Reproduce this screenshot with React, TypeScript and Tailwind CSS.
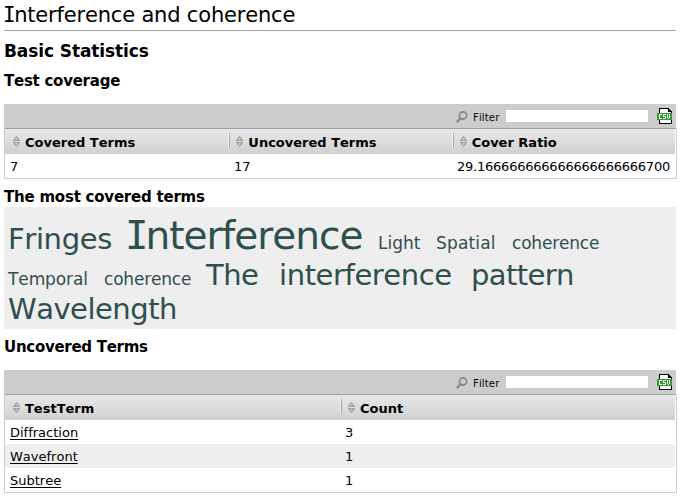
import type { ReactNode } from "react";

function SortIcon() {
  return (
    <svg className="mt-[7px] ml-2 h-[11px] w-[7px] shrink-0" viewBox="0 0 7 11" fill="none" stroke="#a0a0a0" strokeWidth="1.3">
      <path d="M0.8 4.4H6.2L3.5 0.9Z M0.8 6.6H6.2L3.5 10.1Z" />
    </svg>
  );
}

function SearchIcon() {
  return (
    <svg className="mt-[7px] h-3 w-3 shrink-0" viewBox="0 0 12 12" fill="none" stroke="#838383">
      <circle cx="7" cy="4.5" r="3.6" strokeWidth="1.6" />
      <path d="M4.5 7.2L0.8 11.2" strokeWidth="2" />
    </svg>
  );
}

function CsvIcon() {
  return (
    <svg className="mt-1 ml-[9px] h-4 w-[15px] shrink-0" viewBox="0 0 15 16" shapeRendering="crispEdges">
      <path d="M2 0H12V1H13V2H14V3H15V16H2Z" fill="#000" />
      <path d="M3 1H11V4H14V15H3Z" fill="#fff" />
      <path d="M0 5H15V12H0Z" fill="#339933" />
      <path d="M2 6H5V7H3V10H5V11H2Z M6 6H9V7H7V8H9V11H6V10H8V9H6Z M10 6H11V10H12V6H13V10H12V11H11V10H10Z" fill="#fff" />
    </svg>
  );
}

function Toolbar() {
  return (
    <div className="flex h-6 w-[672px] bg-[#cccccc] pl-[452px]">
      <SearchIcon />
      <span className="ml-[5px] w-[33px] text-[10px] leading-[27px] tracking-[0.15px] text-[#110011]">Filter</span>
      <div className="mt-1.5 h-3 w-[142px] bg-white" />
      <CsvIcon />
    </div>
  );
}

function HeadCell({ children, first, wide }: { children: ReactNode; first?: boolean; wide?: boolean }) {
  return (
    <div className={`flex ${wide ? "w-[335px]" : "w-[224px]"}`}>
      {!first && <div className="mt-1 -mr-0.5 h-[15px] w-0.5 border-r border-l border-r-[#a5a5a5] border-l-[#f3f3f3]" />}
      <SortIcon />
      <span className="ml-[5px] text-[13px] leading-[28px] font-bold whitespace-nowrap">{children}</span>
    </div>
  );
}

function Frame({ head, children }: { head: ReactNode; children: ReactNode }) {
  return (
    <div className="w-[673px]">
      <Toolbar />
      <div className="h-px w-[672px] border-l border-[#cccccc] bg-[#a0a0a0]" />
      <div className="border-x border-b border-[#cccccc] pr-px">
        <div className="flex h-[25px] bg-linear-to-b from-[#e8e8e8] to-[#cfd1d0]">{head}</div>
        {children}
      </div>
    </div>
  );
}

function Word({ children, className }: { children: ReactNode; className: string }) {
  return <span className={`shrink-0 whitespace-nowrap ${className}`}>{children}</span>;
}

const rows = [
  ["Diffraction", "3"],
  ["Wavefront", "1"],
  ["Subtree", "1"],
];

export default function App() {
  return (
    <div className="h-[502px] w-[688px] overflow-hidden bg-white px-1 font-['DejaVu_Sans',Verdana,sans-serif] text-black [font-kerning:none] [font-variant-ligatures:none]">
      <h1 className="h-[31px] w-[672px] border-b border-[#a5a5a5] text-[21px] leading-[31px] tracking-[-0.18px] whitespace-nowrap">
        <span className="-ml-[1px] font-['DejaVu_Sans_Mono',monospace] tracking-[-1.5px]">I</span>nterference and coherence
      </h1>
      <h2 className="h-10 text-[17px] leading-[41px] font-bold tracking-[-0.1px]">Basic Statistics</h2>
      <h3 className="h-[33px] text-[15px] leading-[20px] font-bold tracking-[-0.25px]">Test coverage</h3>
      <Frame
        head={
          <>
            <HeadCell first>Covered Terms</HeadCell>
            <HeadCell>Uncovered Terms</HeadCell>
            <HeadCell>Cover Ratio</HeadCell>
          </>
        }
      >
        <div className="flex h-6 pl-[5px] text-[13px] leading-[26px]">
          <span className="w-[224px]">7</span>
          <span className="w-[223px]">17</span>
          <span className="tracking-[-0.23px]">29.166666666666666666666700</span>
        </div>
      </Frame>
      <h3 className="h-7 text-[15px] leading-[36px] font-bold tracking-[-0.22px]">The most covered terms</h3>
      <div className="h-[122px] w-[672px] bg-[#eeeeee] pl-1 text-[#2f4f4f]">
        <div className="flex h-[46px] items-baseline leading-[58px]">
          <Word className="w-[117px] text-[29px] tracking-[-0.35px]">Fringes</Word>
          <Word className="w-[253px] text-[39px] tracking-[-1px]">
            <span className="font-['DejaVu_Sans_Mono',monospace] tracking-[-3px]">I</span>nterference
          </Word>
          <Word className="w-[58px] text-[17px]">Light</Word>
          <Word className="w-[76px] text-[17px] tracking-[0.15px]">Spatial</Word>
          <Word className="text-[17px] tracking-[-0.2px]">coherence</Word>
        </div>
        <div className="flex h-[36px] items-baseline leading-[44px]">
          <Word className="w-24 text-[17px] tracking-[-0.1px]">Temporal</Word>
          <Word className="w-[102px] text-[17px] tracking-[-0.2px]">coherence</Word>
          <Word className="w-[73px] text-[29px] tracking-[-0.5px]">The</Word>
          <Word className="w-[192px] text-[29px] tracking-[-0.4px]">interference</Word>
          <Word className="text-[29px] tracking-[-0.6px]">pattern</Word>
        </div>
        <div className="flex items-baseline leading-[40px]">
          <Word className="text-[29px] tracking-[-0.5px]">Wavelength</Word>
        </div>
      </div>
      <h3 className="h-[41px] text-[15px] leading-[36px] font-bold tracking-[-0.28px]">Uncovered Terms</h3>
      <Frame
        head={
          <>
            <HeadCell first wide>TestTerm</HeadCell>
            <HeadCell wide>Count</HeadCell>
          </>
        }
      >
        {rows.map(([term, count], i) => (
          <div key={term} className={`flex h-6 pl-[5px] text-[13px] leading-[26px] ${i % 2 ? "bg-[#eeeeee]" : ""}`}>
            <span className="w-[335px]">
              <a className="underline decoration-1 underline-offset-2">{term}</a>
            </span>
            <span>{count}</span>
          </div>
        ))}
      </Frame>
    </div>
  );
}
